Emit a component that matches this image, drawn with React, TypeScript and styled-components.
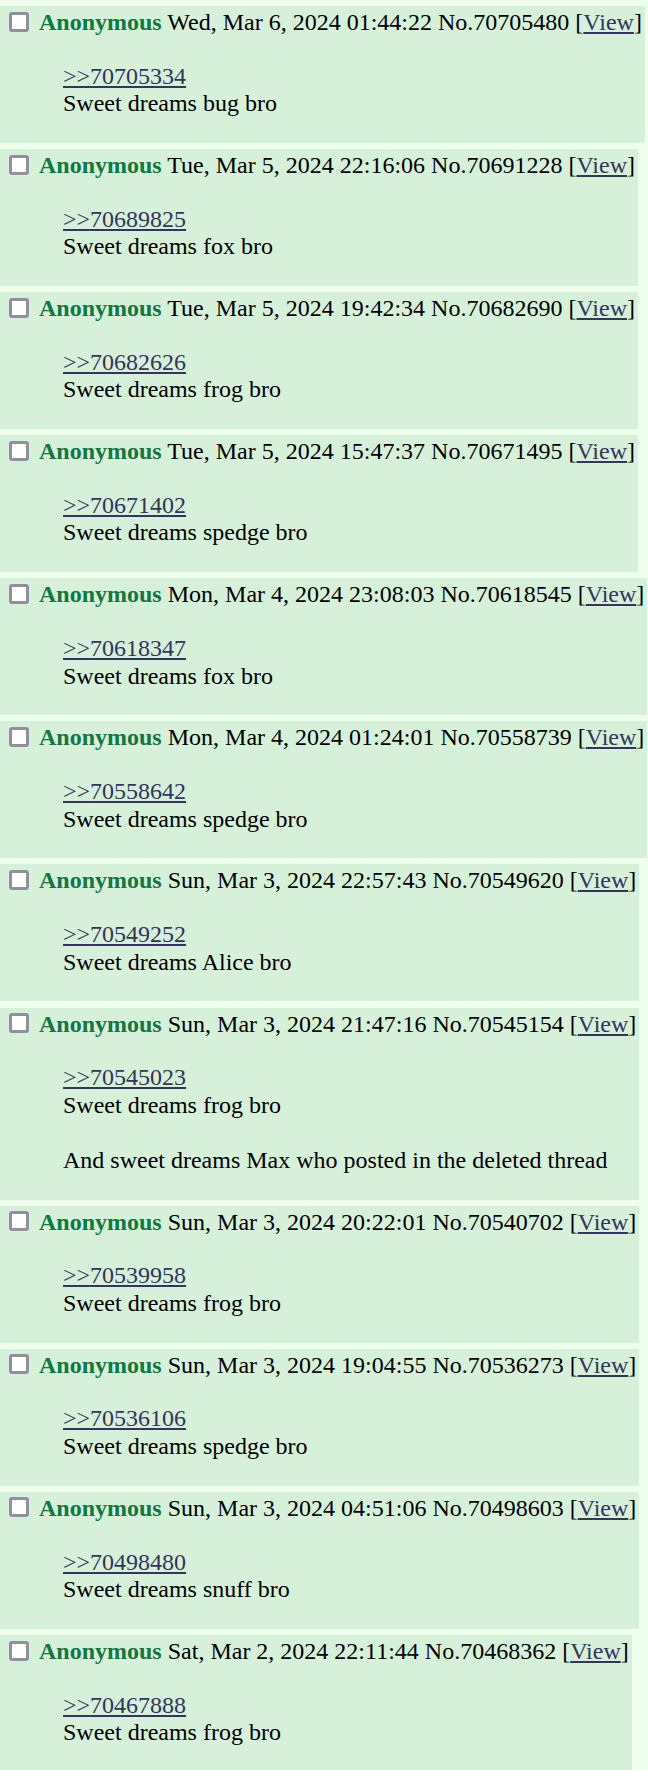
import React from "react";
import styled, { createGlobalStyle } from "styled-components";

const Global = createGlobalStyle`
  html, body {
    margin: 0;
    padding: 0;
    background: #eeffee;
  }
  body {
    font-family: "Liberation Serif", "Times New Roman", serif;
    font-size: 24px;
    line-height: 27.6px;
    color: #000;
  }
`;

const Thread = styled.div`
  display: flex;
  flex-direction: column;
  align-items: flex-start;
  padding: 6px 0;
  gap: 6.3px;
`;

const Reply = styled.div`
  display: block;
  max-width: 100%;
  box-sizing: border-box;
  width: fit-content;
  background: #d6f0da;
  padding: 3px;
`;

const Info = styled.div`
  white-space: nowrap;
`;

const Check = styled.span`
  display: inline-block;
  box-sizing: border-box;
  width: 20px;
  height: 20px;
  margin: 0 4px 0 6px;
  border: 3px solid #8f8f9d;
  border-radius: 3px;
  background: #fff;
  vertical-align: -1.5px;
`;

const Name = styled.span`
  color: #117743;
  font-weight: bold;
`;

const Link = styled.a`
  color: #34345c;
  text-decoration: underline;
  text-underline-offset: 2px;
  cursor: pointer;
`;

const Message = styled.blockquote`
  margin: 26px 0 22px 60px;
`;

type Post = { date: string; no: string; quote: string; lines: string[] };

const posts: Post[] = [
  { date: "Wed, Mar 6, 2024 01:44:22", no: "70705480", quote: "70705334", lines: ["Sweet dreams bug bro"] },
  { date: "Tue, Mar 5, 2024 22:16:06", no: "70691228", quote: "70689825", lines: ["Sweet dreams fox bro"] },
  { date: "Tue, Mar 5, 2024 19:42:34", no: "70682690", quote: "70682626", lines: ["Sweet dreams frog bro"] },
  { date: "Tue, Mar 5, 2024 15:47:37", no: "70671495", quote: "70671402", lines: ["Sweet dreams spedge bro"] },
  { date: "Mon, Mar 4, 2024 23:08:03", no: "70618545", quote: "70618347", lines: ["Sweet dreams fox bro"] },
  { date: "Mon, Mar 4, 2024 01:24:01", no: "70558739", quote: "70558642", lines: ["Sweet dreams spedge bro"] },
  { date: "Sun, Mar 3, 2024 22:57:43", no: "70549620", quote: "70549252", lines: ["Sweet dreams Alice bro"] },
  {
    date: "Sun, Mar 3, 2024 21:47:16",
    no: "70545154",
    quote: "70545023",
    lines: ["Sweet dreams frog bro", "", "And sweet dreams Max who posted in the deleted thread"],
  },
  { date: "Sun, Mar 3, 2024 20:22:01", no: "70540702", quote: "70539958", lines: ["Sweet dreams frog bro"] },
  { date: "Sun, Mar 3, 2024 19:04:55", no: "70536273", quote: "70536106", lines: ["Sweet dreams spedge bro"] },
  { date: "Sun, Mar 3, 2024 04:51:06", no: "70498603", quote: "70498480", lines: ["Sweet dreams snuff bro"] },
  { date: "Sat, Mar 2, 2024 22:11:44", no: "70468362", quote: "70467888", lines: ["Sweet dreams frog bro"] },
];

export default function App() {
  return (
    <>
      <Global />
      <Thread>
        {posts.map((p) => (
          <Reply key={p.no}>
            <Info>
              <Check /> <Name>Anonymous</Name> {p.date} No.{p.no} [<Link>View</Link>]
            </Info>
            <Message>
              <Link>&gt;&gt;{p.quote}</Link>
              {p.lines.map((l, i) => (
                <React.Fragment key={i}>
                  <br />
                  {l}
                </React.Fragment>
              ))}
            </Message>
          </Reply>
        ))}
      </Thread>
    </>
  );
}
